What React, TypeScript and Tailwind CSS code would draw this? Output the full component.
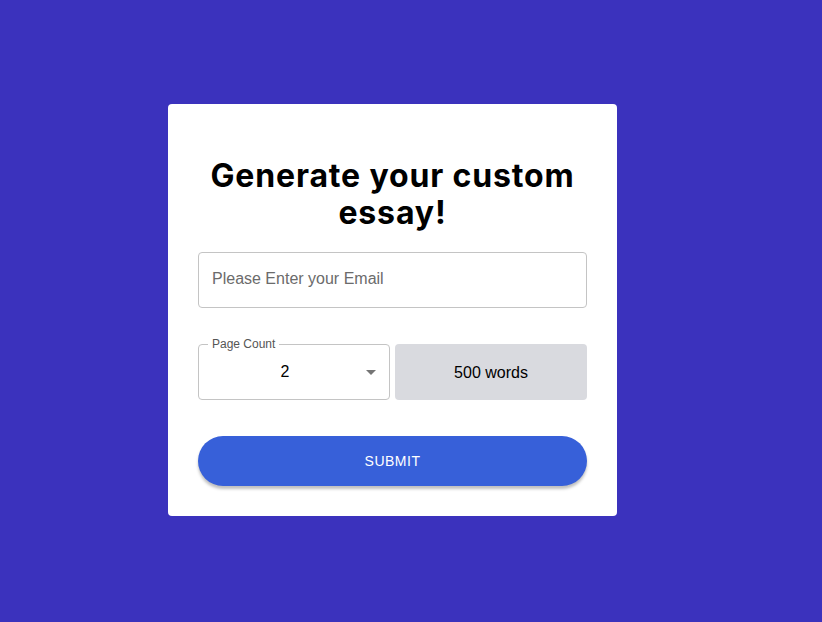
import React from "react";

const App = () => {
  return (
    <div className="min-h-screen w-full bg-[#3b32bd] flex items-start justify-center pt-[104px]">
      <div className="ml-[-37px] w-[449px] bg-white rounded-[4px] px-[30px] pt-[53px] pb-[30px]">
        <h1 className="text-center text-[32px] leading-[37px] font-bold tracking-[0.85px] text-black font-['Inter',sans-serif]">
          Generate your custom essay!
        </h1>
        <div className="mt-[21px] h-[56px] border border-[#c4c4c4] rounded-[4px] flex items-center px-[13px] pb-[2px] font-['Liberation_Sans',sans-serif] text-[16px] text-[#6b6b6b]">
          Please Enter your Email
        </div>
        <div className="mt-[36px] grid grid-cols-2 gap-[5px] font-['Liberation_Sans',sans-serif]">
          <div className="relative h-[56px] border border-[#c4c4c4] rounded-[4px] flex items-center justify-center pr-[18px]">
            <span className="absolute left-[9px] top-[-8px] bg-white px-[4px] text-[12px] leading-[14px] text-[#555]">
              Page Count
            </span>
            <span className="text-[16px] text-black">2</span>
            <svg
              className="absolute right-[13px] top-[25px]"
              width="10"
              height="5"
              viewBox="0 0 10 5"
            >
              <path d="M0 0 L5 5 L10 0 Z" fill="#757575" />
            </svg>
          </div>
          <div className="h-[56px] bg-[#d9dadf] rounded-[4px] flex items-center justify-center pt-[1px] text-[16px] text-black">
            500 words
          </div>
        </div>
        <button className="mt-[36px] w-full h-[50px] rounded-full bg-[#3760d9] text-white text-[14px] tracking-[0.5px] font-['Liberation_Sans',sans-serif] shadow-[0_3px_3px_rgba(0,0,0,0.25)]">
          SUBMIT
        </button>
      </div>
    </div>
  );
};

export default App;
